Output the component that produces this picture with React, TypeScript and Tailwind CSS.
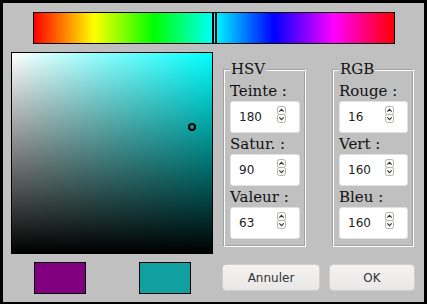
import React from 'react'

const serif = { fontFamily: '"DejaVu Serif", "Liberation Serif", serif' }
const sans = { fontFamily: '"DejaVu Sans", "Liberation Sans", sans-serif' }

function Spinner() {
    return (
        <svg width="9" height="17" viewBox="0 0 9 17" className="block">
            <rect x="0.5" y="0.5" width="8" height="8" rx="2" fill="#fbfbfb" stroke="#b4afa9" />
            <path d="M2.3 5.6 L4.5 3.4 L6.7 5.6" fill="none" stroke="#333" strokeWidth="1.1" />
            <rect x="0.5" y="8.5" width="8" height="8" rx="2" fill="#fbfbfb" stroke="#b4afa9" />
            <path d="M2.3 11.4 L4.5 13.6 L6.7 11.4" fill="none" stroke="#333" strokeWidth="1.1" />
        </svg>
    )
}

function NumField({ value, w }: { value: string; w: string }) {
    return (
        <div className={`mt-[1px] flex h-[32px] ${w} items-start rounded-[3px] border border-[#e2e2e2] bg-white pl-[8px]`}>
            <span className="mt-[8px] text-[12px] leading-[14px] text-[#222]" style={sans}>{value}</span>
            <div className="ml-auto mr-[13px] mt-[4px]">
                <Spinner />
            </div>
        </div>
    )
}

function Group({ title, rows, w, fw }: { title: string; rows: [string, string][]; w: string; fw: string }) {
    return (
        <fieldset
            className={`${fw} border border-t-[#a0a0a0] border-l-[#a0a0a0] border-r-white border-b-white pl-[6px] pt-[4px] pb-[7px] shadow-[inset_1px_1px_0_#ffffff,inset_-1px_-1px_0_#a0a0a0]`}
        >
            <legend className="bg-[#c0c0c0] px-[1px] text-[15px] leading-[18px] text-[#111]" style={serif}>
                {title}
            </legend>
            {rows.map(([label, value], i) => (
                <div key={label} className={i > 0 ? 'mt-[2px]' : ''}>
                    <div className="h-[18px] text-[15px] leading-[18px] text-[#111] whitespace-nowrap" style={serif}>
                        {label}
                    </div>
                    <NumField value={value} w={w} />
                </div>
            ))}
        </fieldset>
    )
}

export default function App() {
    return (
        <div className="h-[304px] w-[427px] overflow-hidden border-[3px] border-b-2 border-black bg-[#c0c0c0]">
            {/* Hue bar */}
            <div
                className="relative mx-auto mt-[9px] h-[32px] w-[362px] border border-black"
                style={{
                    background:
                        'linear-gradient(to right, #ff0000, #ffff00 16.67%, #00ff00 33.33%, #00ffff 50%, #0000ff 66.67%, #ff00ff 83.33%, #ff0000)',
                }}
            >
                <div className="absolute top-0 bottom-0 left-[178px] w-[5px] border-x-2 border-black" />
            </div>

            {/* Middle */}
            <div className="mt-[8px] flex items-start">
                <div
                    className="relative ml-[8px] h-[202px] w-[202px] border border-black"
                    style={{
                        background:
                            'linear-gradient(to top, #000000, rgba(0,0,0,0)), linear-gradient(to right, #ffffff, #00ffff)',
                    }}
                >
                    <div className="absolute left-[176px] top-[70px] h-[8px] w-[8px] rounded-full border-2 border-black" />
                </div>

                <div className="ml-[10px] mt-[8px]">
                    <Group
                        title="HSV"
                        fw="w-[83px]"
                        w="w-[70px]"
                        rows={[
                            ['Teinte :', '180'],
                            ['Satur. :', '90'],
                            ['Valeur :', '63'],
                        ]}
                    />
                </div>
                <div className="ml-[26px] mt-[8px]">
                    <Group
                        title="RGB"
                        fw="w-[82px]"
                        w="w-[69px]"
                        rows={[
                            ['Rouge :', '16'],
                            ['Vert :', '160'],
                            ['Bleu :', '160'],
                        ]}
                    />
                </div>
            </div>

            {/* Bottom */}
            <div className="mt-[8px] flex items-start">
                <div className="ml-[31px] h-[32px] w-[52px] border border-black bg-[#800080]" />
                <div className="ml-[53px] h-[32px] w-[52px] border border-black bg-[#10a0a0]" />
                <button
                    className="ml-[31px] mt-[2px] h-[27px] w-[98px] rounded-[4px] border border-[#d2d0cc] bg-gradient-to-b from-[#f4f3f1] to-[#e9e8e6] text-[12px] text-[#2e3436]"
                    style={sans}
                >
                    Annuler
                </button>
                <button
                    className="ml-[9px] mt-[2px] h-[27px] w-[86px] rounded-[4px] border border-[#d2d0cc] bg-gradient-to-b from-[#f4f3f1] to-[#e9e8e6] text-[12px] text-[#2e3436]"
                    style={sans}
                >
                    OK
                </button>
            </div>
        </div>
    )
}
